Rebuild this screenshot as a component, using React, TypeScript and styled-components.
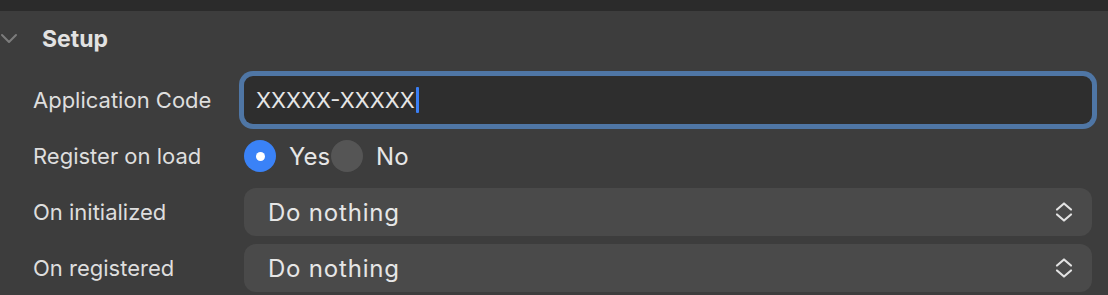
import React from "react";
import styled, { createGlobalStyle } from "styled-components";

const Global = createGlobalStyle`
  html, body { margin: 0; padding: 0; background: #3d3d3d; }
  body { font-family: Inter, "Noto Sans", "Liberation Sans", sans-serif; -webkit-font-smoothing: antialiased; }
`;

const Page = styled.div`
  width: 1108px;
  height: 295px;
  background: #3d3d3d;
  display: flex;
  flex-direction: column;
  overflow: hidden;
`;

const TopBand = styled.div`
  height: 11px;
  background: #2b2b2b;
  flex: none;
`;

const Header = styled.div`
  display: flex;
  align-items: center;
  height: 56px;
`;

const Chevron = styled.svg`
  width: 18px;
  height: 12px;
  margin-right: 24px;
  flex: none;
`;

const Title = styled.div`
  font-size: 23px;
  font-weight: 700;
  color: #e2e2e2;
`;

const Form = styled.div`
  display: grid;
  grid-template-columns: 211px 1fr;
  grid-auto-rows: 48px;
  row-gap: 8px;
  padding: 9px 16px 0 33px;
`;

const Label = styled.div`
  display: flex;
  align-items: center;
  font-size: 22px;
  color: #dedede;
  white-space: nowrap;
`;

const TextInput = styled.div`
  display: flex;
  align-items: center;
  height: 48px;
  box-sizing: border-box;
  background: #2e2e2e;
  border-radius: 9px;
  box-shadow: 0 0 0 5px #4f76a5;
  padding-left: 12px;
  font-size: 22px;
  color: #e6e6e6;
`;

const Caret = styled.span`
  display: inline-block;
  width: 3px;
  height: 26px;
  background: #3a7ff6;
  border-radius: 1px;
  margin-left: 1px;
`;

const RadioGroup = styled.div`
  display: flex;
  align-items: center;
`;

const RadioCircle = styled.span<{ $checked?: boolean }>`
  width: 32px;
  height: 32px;
  border-radius: 50%;
  flex: none;
  background: ${(p) => (p.$checked ? "#3a82f7" : "#555555")};
  display: flex;
  align-items: center;
  justify-content: center;
  &::after {
    content: "";
    width: 9px;
    height: 9px;
    border-radius: 50%;
    background: #ffffff;
    display: ${(p) => (p.$checked ? "block" : "none")};
  }
`;

const RadioText = styled.span`
  font-size: 24px;
  color: #e6e6e6;
  margin-left: 13px;
  margin-right: 1px;
`;

const Select = styled.div`
  display: flex;
  align-items: center;
  justify-content: space-between;
  height: 48px;
  box-sizing: border-box;
  background: #4a4a4a;
  border-radius: 12px;
  padding: 0 19px 0 24px;
  font-size: 24px;
  letter-spacing: 0.8px;
  color: #e6e6e6;
`;

const UpDown = styled.svg`
  width: 18px;
  height: 20px;
  flex: none;
`;

const SelectBox = ({ value }: { value: string }) => (
  <Select>
    <span>{value}</span>
    <UpDown viewBox="0 0 18 20" fill="none" stroke="#e2e2e2" strokeWidth="2.2" strokeLinecap="round" strokeLinejoin="round">
      <path d="M2 7.5 L9 1.5 L16 7.5" />
      <path d="M2 12.5 L9 18.5 L16 12.5" />
    </UpDown>
  </Select>
);

export default function App() {
  return (
    <>
      <Global />
      <Page>
        <TopBand />
        <Header>
          <Chevron viewBox="0 0 18 12" fill="none" stroke="#7c7c7c" strokeWidth="2" strokeLinecap="round" strokeLinejoin="round">
            <path d="M2 2 L9 9 L16 2" />
          </Chevron>
          <Title>Setup</Title>
        </Header>
        <Form>
          <Label>Application Code</Label>
          <TextInput>
            XXXXX-XXXXX<Caret />
          </TextInput>
          <Label>Register on load</Label>
          <RadioGroup>
            <RadioCircle $checked />
            <RadioText>Yes</RadioText>
            <RadioCircle />
            <RadioText>No</RadioText>
          </RadioGroup>
          <Label>On initialized</Label>
          <SelectBox value="Do nothing" />
          <Label>On registered</Label>
          <SelectBox value="Do nothing" />
        </Form>
      </Page>
    </>
  );
}
